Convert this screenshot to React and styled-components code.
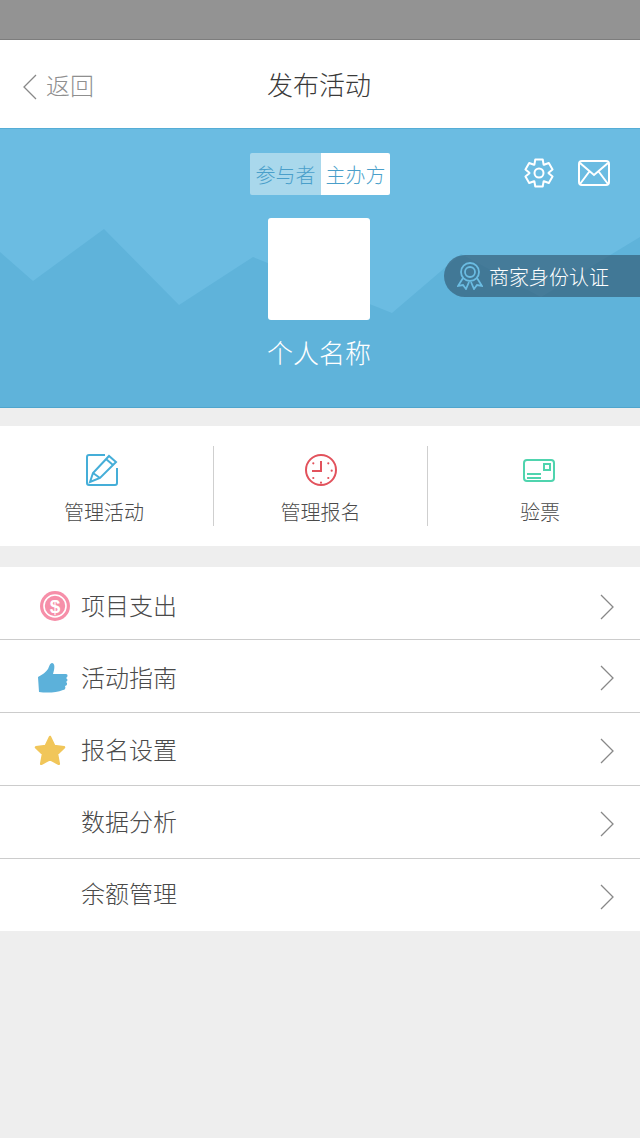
import React from 'react';
import styled, { createGlobalStyle } from 'styled-components';

const GlobalStyle = createGlobalStyle`
  html, body {
    margin: 0;
    padding: 0;
    background: #eeeeee;
    font-family: "Noto Sans CJK SC", "Noto Sans", sans-serif;
    font-weight: 300;
  }
`;

const Page = styled.div`
  width: 640px;
  height: 1138px;
  overflow: hidden;
  background: #eeeeee;
`;

const StatusBar = styled.div`
  height: 39px;
  background: #939393;
  border-bottom: 1px solid #7d7d7d;
`;

const NavBar = styled.header`
  height: 88px;
  background: #fff;
  display: grid;
  grid-template-columns: 1fr auto 1fr;
  align-items: center;
  padding: 0 24px 0 22px;
`;

const Back = styled.div`
  display: flex;
  align-items: center;
  gap: 9px;
  font-size: 24px;
  color: #8f8f8f;

  svg {
    margin-top: 6px;
  }
`;

const Title = styled.h1`
  margin: 0 0 2px;
  font-size: 26px;
  font-weight: 300;
  color: #3a3a3a;
`;

const Banner = styled.section`
  position: relative;
  height: 280px;
  background: #6bbce2;
  border-top: 1px solid #55add6;
  border-bottom: 1px solid #4fa5cd;
  padding-top: 24px;
  box-sizing: border-box;
  display: flex;
  flex-direction: column;
  align-items: center;
  overflow: hidden;
`;

const Mountains = styled.svg`
  position: absolute;
  left: 0;
  top: -1px;
`;

const TopRow = styled.div`
  position: relative;
  width: 100%;
  display: grid;
  grid-template-columns: 1fr auto 1fr;
  align-items: start;
`;

const Tabs = styled.div`
  grid-column: 2;
  display: flex;
  height: 42px;
  border-radius: 2px;
  overflow: hidden;
`;

const Tab = styled.div`
  width: ${(p) => (p.$active ? 71 : 69)}px;
  display: flex;
  align-items: center;
  justify-content: center;
  font-size: 20px;
  color: #4a9fca;
  background: ${(p) => (p.$active ? '#a9d8ec' : '#fff')};
`;

const TopIcons = styled.div`
  display: flex;
  justify-content: flex-end;
  align-items: center;
  gap: 23px;
  padding: 4px 30px 0 0;
`;

const Avatar = styled.div`
  position: relative;
  width: 102px;
  height: 102px;
  margin: 23px 2px 0 0;
  background: #fff;
  border-radius: 3px;
`;

const Name = styled.div`
  position: relative;
  margin: 12px 2px 0 0;
  font-size: 26px;
  line-height: 40px;
  color: #fff;
`;

const Badge = styled.div`
  position: absolute;
  left: 444px;
  top: 126px;
  width: 196px;
  height: 42px;
  display: flex;
  align-items: center;
  gap: 6px;
  padding-left: 13px;
  box-sizing: border-box;
  border-radius: 21px 0 0 21px;
  background: rgba(50, 90, 115, 0.66);
  color: #fff;
  font-size: 20px;
`;

const Actions = styled.nav`
  margin-top: 18px;
  height: 120px;
  background: #fff;
  display: grid;
  grid-template-columns: 214px 214px 1fr;
  align-items: center;
`;

const Action = styled.div`
  height: 80px;
  box-sizing: border-box;
  display: flex;
  flex-direction: column;
  align-items: center;
  justify-content: space-between;
  padding: 0 ${(p) => p.$padRight || 0}px 0 ${(p) => p.$padLeft || 0}px;
  border-right: ${(p) => (p.$last ? 'none' : '1px solid #cfcfcf')};
  font-size: 20px;
  line-height: 28px;
  color: #4a4a4a;
`;

const ActionIcon = styled.svg`
  display: block;
  margin: 7px ${(p) => p.$nudge || 0}px 0 0;
`;

const List = styled.ul`
  list-style: none;
  margin: 21px 0 0;
  padding: 0;
  background: #fff;
`;

const Row = styled.li`
  height: ${(p) => (p.$last ? 72 : 73)}px;
  box-sizing: border-box;
  display: flex;
  align-items: center;
  padding-right: 26px;
  border-bottom: ${(p) => (p.$last ? 'none' : '1px solid #cccccc')};
  font-size: 24px;
  color: #4a4a4a;
`;

const RowIcon = styled.div`
  width: 81px;
  flex: none;
  display: flex;
  justify-content: flex-end;
  padding-right: ${(p) => p.$right}px;
  margin-top: ${(p) => p.$down}px;
  box-sizing: border-box;
`;

const RowLabel = styled.span`
  flex: 1;
  margin-bottom: ${(p) => p.$lift}px;
`;

const ChevronIcon = styled.svg`
  margin-top: ${(p) => p.$down}px;
`;

// six tooth outline for the settings icon
const gearPath = () => {
  const pts = [];
  for (let i = 0; i < 6; i++) {
    const a = -Math.PI / 2 + (i * Math.PI) / 3;
    [[-0.5, 9.6], [-0.27, 14], [0.27, 14], [0.5, 9.6]].forEach(([da, r]) => {
      pts.push(`${(16 + r * Math.cos(a + da)).toFixed(2)} ${(16 + r * Math.sin(a + da)).toFixed(2)}`);
    });
  }
  return `M${pts.join('L')}Z`;
};

const rows = [
  {
    label: '项目支出',
    right: 10,
    down: 6,
    lift: -2,
    chevron: 8,
    icon: (
      <svg width="32" height="32" viewBox="0 0 32 32">
        <circle cx="16" cy="16" r="15" fill="#f68fa9" />
        <circle cx="16" cy="16" r="11" fill="none" stroke="#fff" strokeWidth="1.600" />
        <text x="16" y="22.500" textAnchor="middle" fontSize="19" fontWeight="700" fill="#fff" fontFamily="Liberation Sans">$</text>
      </svg>
    ),
  },
  {
    label: '活动指南',
    right: 13,
    down: 4,
    lift: 0,
    chevron: 4,
    icon: (
      <svg width="30" height="30" viewBox="0 0 30 30">
        <path d="M0 14C4 12 8 9 10 6 11 4 12 0 14 0 17 0 17 5 15 11H28C30 11 30 14 28 15 30 16 30 18 28 19 30 20 29 23 27 23 28 25 27 27 25 27 18 30 8 30 1 29Z" fill="#5cb1da" />
      </svg>
    ),
  },
  {
    label: '报名设置',
    right: 15,
    down: 4,
    lift: 2,
    chevron: 4,
    icon: (
      <svg width="32" height="32" viewBox="0 0 32 32">
        <path d="M16 2l4.300 9 9.700 1.300-7 6.800 1.800 9.700L16 24.200l-8.800 4.600 1.800-9.700-7-6.800 9.700-1.300z" fill="#f1c65a" stroke="#f1c65a" strokeWidth="2.500" strokeLinejoin="round" />
      </svg>
    ),
  },
  { label: '数据分析', lift: 4, chevron: 4 },
  { label: '余额管理', lift: 6, chevron: 4 },
];

export default function App() {
  return (
    <Page>
      <GlobalStyle />
      <StatusBar />
      <NavBar>
        <Back>
          <svg width="15" height="26" viewBox="0 0 15 26" fill="none" stroke="#888" strokeWidth="1.300">
            <path d="M14 1L2 13l12 12" />
          </svg>
          返回
        </Back>
        <Title>发布活动</Title>
      </NavBar>
      <Banner>
        <Mountains width="640" height="280" viewBox="0 0 640 280">
          <path d="M0 124L33 153 104 101 179 177 253 129 392 185 461 126 541 169 640 109V280H0z" fill="#5fb3da" />
        </Mountains>
        <TopRow>
          <Tabs>
            <Tab $active>参与者</Tab>
            <Tab>主办方</Tab>
          </Tabs>
          <TopIcons>
            <svg width="32" height="32" viewBox="0 0 32 32" fill="none" stroke="#fff" strokeWidth="2" strokeLinejoin="round">
              <path d={gearPath()} />
              <circle cx="16" cy="16" r="4.500" />
            </svg>
            <svg width="32" height="26" viewBox="0 0 32 26" fill="none" stroke="#fff" strokeWidth="2">
              <rect x="1" y="1" width="30" height="24" rx="3" />
              <path d="M2 3l14 12L30 3M2 24l9-12M30 24l-9-12" />
            </svg>
          </TopIcons>
        </TopRow>
        <Avatar />
        <Name>个人名称</Name>
        <Badge>
          <svg width="26" height="28" viewBox="0 0 26 28" fill="none" stroke="#6bbce2" strokeWidth="1.800">
            <circle cx="13" cy="10" r="9" />
            <circle cx="13" cy="10" r="5" />
            <path d="M6 16L1 24l5-1 3 4 3-7M20 16l5 8-5-1-3 4-3-7" />
          </svg>
          商家身份认证
        </Badge>
      </Banner>
      <Actions>
        <Action $padRight={5}>
          <ActionIcon $nudge={4} width="34" height="34" viewBox="0 0 34 34" fill="none" stroke="#45aed8" strokeWidth="2">
            <path d="M20 2H4a2 2 0 0 0-2 2v26a2 2 0 0 0 2 2h26a2 2 0 0 0 2-2V15" />
            <path d="M5 29l3-9L24 3l7 6-16 16zM8 20l7 5M21 6l7 6" />
          </ActionIcon>
          管理活动
        </Action>
        <Action>
          <ActionIcon width="34" height="34" viewBox="0 0 34 34" fill="none" stroke="#e2525c" strokeWidth="2">
            <circle cx="17" cy="17" r="15" />
            <path d="M17 8v10H8" />
            <path d="M9.300 10.300v.01M24.300 10.300v.01M27.700 17.700v.01M24.300 25v.01M17 29.700v.01M9.300 25v.01" strokeLinecap="round" strokeWidth="2.200" />
          </ActionIcon>
          管理报名
        </Action>
        <Action $last $padLeft={12}>
          <ActionIcon $nudge={2} width="34" height="34" viewBox="0 0 34 34" fill="none" stroke="#4fd4ae" strokeWidth="2">
            <rect x="2" y="7" width="30" height="21" rx="3" />
            <rect x="22" y="11" width="6" height="6" />
            <path d="M5 21h14M5 25h14" />
          </ActionIcon>
          验票
        </Action>
      </Actions>
      <List>
        {rows.map((r, i) => (
          <Row key={r.label} $last={i === rows.length - 1}>
            <RowIcon $right={r.right || 0} $down={r.down || 0}>{r.icon}</RowIcon>
            <RowLabel $lift={r.lift}>{r.label}</RowLabel>
            <ChevronIcon $down={r.chevron} width="14" height="26" viewBox="0 0 14 26" fill="none" stroke="#888" strokeWidth="1.300">
              <path d="M1 1l12 12L1 25" />
            </ChevronIcon>
          </Row>
        ))}
      </List>
    </Page>
  );
}
